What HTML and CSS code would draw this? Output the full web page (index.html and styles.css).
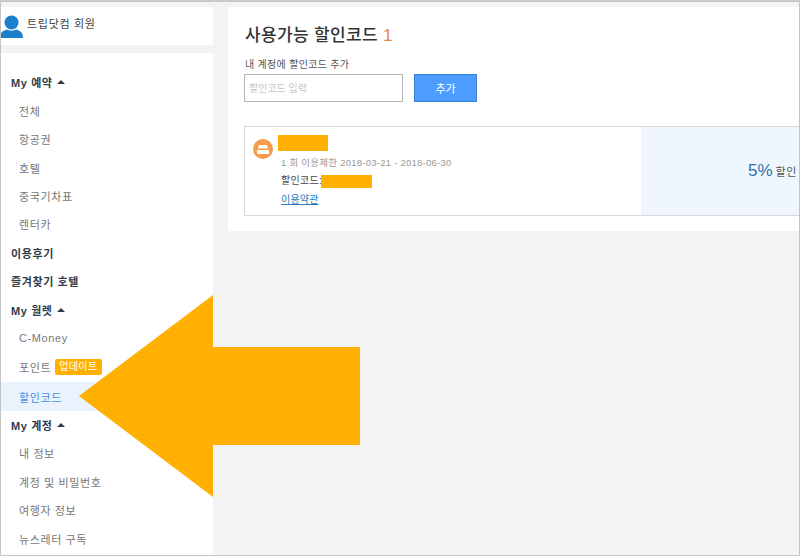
FILE: index.html
```html
<!DOCTYPE html>
<html lang="ko">
<head>
<meta charset="utf-8">
<title>할인코드</title>
<link rel="stylesheet" href="styles.css">
</head>
<body>
<div class="frame">
  <aside class="sidebar">
    <div class="profile">
      <svg class="avatar" width="24" height="24" viewBox="0 0 24 24"><circle cx="11.500" cy="7.500" r="7" fill="#1b7fcc"/><path d="M0 23c0-5 2-7 7-8.500 2.500 1.500 6.500 1.500 9 0 5 1.500 7 3.500 7 8.500z" fill="#1b7fcc"/></svg>
      <span class="profile-name">트립닷컴 회원</span>
    </div>
    <nav class="menu">
      <a class="item head">My 예약 <i class="caret"></i></a>
      <a class="item sub">전체</a>
      <a class="item sub">항공권</a>
      <a class="item sub">호텔</a>
      <a class="item sub">중국기차표</a>
      <a class="item sub">렌터카</a>
      <a class="item head">이용후기</a>
      <a class="item head">즐겨찾기 호텔</a>
      <a class="item head">My 월렛 <i class="caret"></i></a>
      <a class="item sub">C-Money</a>
      <a class="item sub point">포인트 <span class="badge">업데이트</span></a>
      <a class="item sub active">할인코드</a>
      <a class="item head">My 계정 <i class="caret"></i></a>
      <a class="item sub">내 정보</a>
      <a class="item sub">계정 및 비밀번호</a>
      <a class="item sub">여행자 정보</a>
      <a class="item sub">뉴스레터 구독</a>
    </nav>
  </aside>
  <main class="panel">
    <h1 class="title">사용가능 할인코드 <span class="count">1</span></h1>
    <label class="add-label">내 계정에 할인코드 추가</label>
    <div class="add-row">
      <input class="code-input" type="text" placeholder="할인코드 입력">
      <button class="add-btn">추가</button>
    </div>
    <section class="coupon">
      <div class="coupon-info">
        <span class="coupon-icon">
          <svg width="12" height="9" viewBox="0 0 12 9"><path d="M2 0h8l1 3.500H1z" fill="#fff"/><rect x="0" y="5" width="12" height="4" rx=".5" fill="#fff"/></svg>
        </span>
        <div class="coupon-text">
          <div class="mask mask-name"></div>
          <div class="limit">1 회 이용제한 2018-03-21 - 2018-06-30</div>
          <div class="code">할인코드:<span class="mask mask-code"></span></div>
          <a class="terms">이용약관</a>
        </div>
      </div>
      <div class="coupon-value"><span class="pct">5%</span> <span class="off">할인</span></div>
    </section>
  </main>
  <svg class="arrow" width="281" height="202" viewBox="0 0 281 202"><polygon points="0,101 134,0 134,52 281,52 281,150 134,150 134,202" fill="#ffb000"/></svg>
</div>
</body>
</html>
```
FILE: styles.css
```css
html, body { margin: 0; padding: 0; }
body {
  width: 800px;
  height: 556px;
  overflow: hidden;
  font-family: "Liberation Sans", "Noto Sans CJK KR", sans-serif;
}
.frame {
  position: relative;
  box-sizing: border-box;
  width: 800px;
  height: 556px;
  display: flex;
  align-items: flex-start;
  gap: 15px;
  background: #f3f3f3;
  border-top: 2px solid #c9c9c9;
  border-left: 1px solid #c4c4c4;
  border-right: 1px solid #c4c4c4;
  border-bottom: 1px solid #c4c4c4;
  padding-top: 5px;
  overflow: hidden;
}
.sidebar {
  width: 212px;
  flex: none;
  display: flex;
  flex-direction: column;
  gap: 8px;
}
.profile {
  height: 38px;
  background: #fff;
  display: flex;
  align-items: flex-start;
  gap: 3px;
  padding-top: 8px;
  box-sizing: border-box;
}
.avatar { flex: none; margin-left: -1px; }
.profile-name { font-size: 11px; line-height: 18px; color: #444; letter-spacing: .7px; }
.menu {
  height: 502px;
  box-sizing: border-box;
  background: #fff;
  padding-top: 15px;
  display: flex;
  flex-direction: column;
}
.item {
  height: 28.440px;
  flex: none;
  display: flex;
  align-items: center;
  box-sizing: border-box;
  font-size: 11px;
  letter-spacing: .6px;
}
.head { padding-left: 10px; font-weight: 700; color: #333b47; gap: 4px; }
.sub { padding-left: 18px; color: #777; gap: 4px; }
.point { height: 30px; padding-bottom: 1.500px; }
.active { background: #eaf3fd; color: #3b8ee6; }
.caret {
  width: 0;
  height: 0;
  border-left: 4px solid transparent;
  border-right: 4px solid transparent;
  border-bottom: 4px solid #333b47;
}
.badge {
  background: #ffb000;
  color: #fff;
  font-size: 10px;
  line-height: 16px;
  padding: 0 4px;
  border-radius: 2px;
  letter-spacing: .4px;
}
.panel {
  width: 580px;
  flex: none;
  height: 224px;
  box-sizing: border-box;
  background: #fff;
  padding: 17px 0 0 17px;
}
.title {
  margin: 0;
  font-size: 17px;
  line-height: 24px;
  font-weight: 500;
  color: #333;
  letter-spacing: .35px;
}
.count { color: #e8853c; }
.add-label {
  display: block;
  margin-top: 10px;
  font-size: 10px;
  line-height: 13px;
  color: #555;
  letter-spacing: .3px;
}
.add-row { display: flex; gap: 11px; margin-top: 3px; margin-left: -1px; }
.code-input {
  width: 159px;
  height: 28px;
  box-sizing: border-box;
  border: 1px solid #b5b5b5;
  padding: 0 4px;
  font: 10px "Liberation Sans", "Noto Sans CJK KR", sans-serif;
  background: #fff;
  outline: none;
}
.code-input::placeholder { color: #c6c6c6; }
.add-btn {
  width: 63px;
  height: 28px;
  border: 1px solid #3a7fd0;
  background: #4c9dff;
  color: #fff;
  font: 11px "Liberation Sans", "Noto Sans CJK KR", sans-serif;
  padding: 0;
}
.coupon {
  display: flex;
  margin-top: 24px;
  margin-left: -1px;
  height: 90px;
  width: 570px;
  box-sizing: border-box;
  border: 1px solid #d6d8da;
}
.coupon-info {
  width: 396px;
  flex: none;
  box-sizing: border-box;
  display: flex;
  padding: 8px 0 0 8px;
  gap: 5px;
}
.coupon-icon {
  width: 20px;
  height: 20px;
  margin-top: 4px;
  border-radius: 50%;
  background: #f79c4a;
  display: flex;
  align-items: center;
  justify-content: center;
  flex: none;
}
.mask { background: #ffb000; display: block; }
.mask-name { width: 50px; height: 16px; }
.limit { margin-top: 5px; font-size: 9.500px; line-height: 14px; color: #999; letter-spacing: .25px; padding-left: 3px; white-space: nowrap; }
.code { margin-top: 4px; font-size: 10px; line-height: 14px; color: #444; padding-left: 3px; display: flex; align-items: center; letter-spacing: .3px; }
.mask-code { width: 51px; height: 13px; margin-left: -1px; }
.terms { display: block; margin-top: 5px; padding-left: 3px; font-size: 10px; line-height: 13px; color: #2a7ac0; text-decoration: underline; letter-spacing: .2px; }
.coupon-value {
  flex: 1;
  background: #eff6fd;
  display: flex;
  align-items: center;
  padding-left: 107px;
  gap: 3px;
  white-space: nowrap;
}
.pct { font-size: 17px; color: #2f72a8; }
.off { font-size: 11px; color: #555; letter-spacing: .5px; }
.arrow { position: absolute; left: 78px; top: 293px; }
```
